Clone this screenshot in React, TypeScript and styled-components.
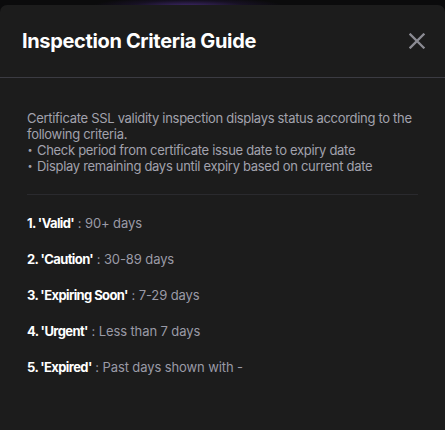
import React from "react";
import styled, { createGlobalStyle } from "styled-components";

const Global = createGlobalStyle`
  html, body { margin: 0; padding: 0; background: #0b0b0c; }
  body { font-family: Inter, "Noto Sans", sans-serif; -webkit-font-smoothing: antialiased; }
`;

const Page = styled.div`
  width: 445px;
  height: 430px;
  padding-top: 5px;
  box-sizing: border-box;
  background:
    radial-gradient(ellipse 95px 9px at 188px 6px, rgba(70, 44, 120, 0.85), rgba(40, 25, 70, 0.4) 60%, transparent 100%),
    #0b0b0c;
  display: flex;
  flex-direction: column;
`;

const Modal = styled.div`
  flex: 1;
  background: #1c1c1c;
  border-radius: 7px 7px 0 0;
  display: flex;
  flex-direction: column;
`;

const Header = styled.div`
  height: 72px;
  display: flex;
  align-items: center;
  justify-content: space-between;
  padding: 0 19px 0 22px;
  border-bottom: 1px solid #3b3b42;
`;

const Title = styled.h2`
  margin: 0;
  font-size: 20px;
  font-weight: 700;
  color: #ffffff;
  letter-spacing: -0.35px;
`;

const CloseButton = styled.button`
  background: none;
  border: none;
  padding: 0;
  width: 18px;
  height: 18px;
  display: flex;
  align-items: center;
  justify-content: center;
  color: #8b8b93;
  cursor: pointer;
`;

const Body = styled.div`
  padding: 32px 27px 0 27px;
  display: flex;
  flex-direction: column;
`;

const Intro = styled.div`
  font-size: 13px;
  line-height: 16px;
  color: #a2a2ad;
  letter-spacing: -0.3px;
  padding-bottom: 20px;
  border-bottom: 1px solid #2a2a2e;
`;

const Bullet = styled.div`
  display: flex;
  gap: 4px;
  &::before {
    content: "•";
    width: 6px;
    font-size: 9px;
    text-align: center;
  }
`;

const List = styled.ol`
  list-style: none;
  margin: 0;
  padding: 20px 0 0 0;
  display: flex;
  flex-direction: column;
  gap: 20px;
`;

const Item = styled.li`
  font-size: 13px;
  line-height: 16px;
  color: #9a9aa6;
  letter-spacing: -0.1px;
`;

const Label = styled.strong`
  color: #ffffff;
  font-weight: 700;
  letter-spacing: -0.6px;
`;

const items = [
  ["1. 'Valid'", "90+ days"],
  ["2. 'Caution'", "30-89 days"],
  ["3. 'Expiring Soon'", "7-29 days"],
  ["4. 'Urgent'", "Less than 7 days"],
  ["5. 'Expired'", "Past days shown with -"],
];

export default function App() {
  return (
    <>
      <Global />
      <Page>
        <Modal>
          <Header>
            <Title>Inspection Criteria Guide</Title>
            <CloseButton aria-label="Close">
              <svg width="16" height="16" viewBox="0 0 16 16" fill="none">
                <path d="M1.5 1.5L14.5 14.5M14.5 1.5L1.5 14.5" stroke="currentColor" strokeWidth="2.3" strokeLinecap="square" />
              </svg>
            </CloseButton>
          </Header>
          <Body>
            <Intro>
              Certificate SSL validity inspection displays status according to the following criteria.
              <Bullet>Check period from certificate issue date to expiry date</Bullet>
              <Bullet>Display remaining days until expiry based on current date</Bullet>
            </Intro>
            <List>
              {items.map(([l, v]) => (
                <Item key={l}>
                  <Label>{l}</Label> : {v}
                </Item>
              ))}
            </List>
          </Body>
        </Modal>
      </Page>
    </>
  );
}
